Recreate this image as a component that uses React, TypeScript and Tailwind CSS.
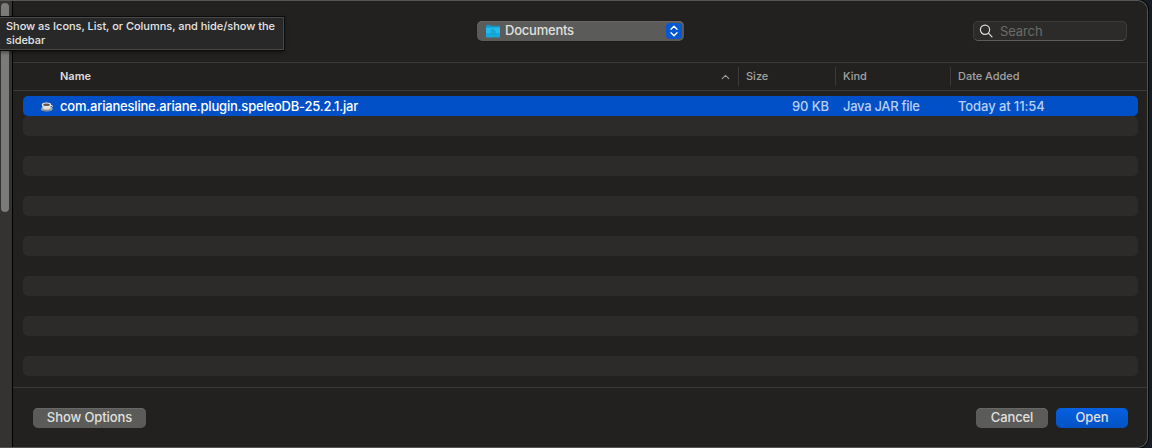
import React from "react";

const emptyRows = Array.from({ length: 13 }, (_, i) => i);

function FolderIcon() {
  return (
    <svg width="16" height="14" viewBox="0 0 16 14" className="shrink-0">
      <path d="M1 2Q1 .8 2.2.8H5.3L6.6 1.7H13.8Q15 1.7 15 2.9V5H1Z" fill="#1793c4" />
      <path d="M1 3.5H15V12.2Q15 13.2 14 13.2H2Q1 13.2 1 12.2Z" fill="#22bcec" />
      <path d="M1 9H15V12.2Q15 13.2 14 13.2H2Q1 13.2 1 12.2Z" fill="#16a9e0" />
      <path d="M6.2 5.7H8.8L10.2 7.1V11H6.2Z" fill="#1da5d3" stroke="#189ac9" strokeWidth=".6" />
    </svg>
  );
}

function JarIcon() {
  return (
    <svg width="14" height="12" viewBox="0 0 14 12" className="shrink-0">
      <ellipse cx="6.8" cy="8" rx="5.9" ry="2.4" fill="#a3a3a1" />
      <path d="M10.6 4.4Q12.9 4 12.4 5.8Q11.8 7.2 9.8 7" fill="none" stroke="#d5d5d2" strokeWidth="1" />
      <path d="M2 3.8H11Q11 7.2 8.8 8.6H4.4Q2 7.2 2 3.8Z" fill="#dededb" />
      <ellipse cx="6.5" cy="3.6" rx="4.6" ry="2.2" fill="#eeeeeb" />
      <ellipse cx="6.5" cy="3.7" rx="3.4" ry="1.3" fill="#62574f" />
      <path d="M3.5 9.2Q6.7 10.4 10 9.2" fill="none" stroke="#706f70" strokeWidth=".6" />
    </svg>
  );
}

export default function App() {
  return (
    <div className="relative h-[448px] w-[1152px] overflow-hidden bg-[#171d22] font-['Inter','Liberation_Sans',sans-serif] text-[13px] text-[#e0e0df]">
      <div className="flex h-full w-[1148px] overflow-hidden rounded-r-[10px] border-y border-r border-[#555553] bg-[#22211f] shadow-[0_0_0_1px_#050607]">
        <aside className="w-[13px] shrink-0 border-r border-black bg-[#343331] pt-[2px] pl-px">
          <div className="h-[209px] w-2 rounded-full bg-[#7b7b79]" />
        </aside>

        <main className="flex min-w-0 flex-1 flex-col">
          <header className="flex h-[62px] shrink-0 items-start border-b border-[#3b3a38] pt-5">
            <button className="ml-[464px] flex h-5 w-[207px] items-center rounded-[5px] bg-[#5b5b59] pr-[2px] pl-2 shadow-[inset_0_1px_0_#686866,0_0_1px_#111]">
              <FolderIcon />
              <span className="ml-1 whitespace-nowrap font-medium tracking-[-0.22px]">Documents</span>
              <span className="ml-auto flex h-4 w-4 items-center justify-center rounded-[4px] bg-[#0557d2]">
                <svg width="10" height="14" viewBox="0 0 10 14" fill="none" stroke="white" strokeWidth="1.4" strokeLinecap="round" strokeLinejoin="round">
                  <path d="M2 5.2 5 2.2 8 5.2M2 8.8 5 11.8 8 8.8" />
                </svg>
              </span>
            </button>
            <label className="ml-[289px] flex h-5 w-[154px] items-center rounded-[5px] border border-[#3d3c3a] border-b-[#5c5c5a] bg-[#2c2b29] pl-[5px]">
              <svg className="-mt-px" width="14" height="14" viewBox="0 0 14 14" fill="none" stroke="#dededc" strokeWidth="1.2" strokeLinecap="round">
                <circle cx="6" cy="5.7" r="4.6" />
                <path d="m9.4 9.1 3.6 3.7" />
              </svg>
              <span className="ml-[7px] pt-px tracking-[-0.1px] text-[#6b6b69]">Search</span>
            </label>
          </header>

          <div className="flex h-7 shrink-0 items-center border-b border-[#3b3a38] text-[11px] font-medium text-[#a3a3a1]">
            <div className="flex h-full w-[725px] items-center pr-2 pl-[47px]">
              <span className="font-semibold text-[#dededc]">Name</span>
              <svg className="ml-auto" width="9" height="6" viewBox="0 0 9 6" fill="none" stroke="#a0a09e" strokeWidth="1.1" strokeLinecap="round">
                <path d="m1.2 4.6 3.3-3.2 3.3 3.2" />
              </svg>
            </div>
            <div className="flex h-[19px] w-[97px] items-center border-l border-[#3b3a38] pl-[7px]">Size</div>
            <div className="flex h-[19px] w-[115px] items-center border-l border-[#3b3a38] pl-[7px]">Kind</div>
            <div className="flex h-[19px] flex-1 items-center border-l border-[#3b3a38] pl-[7px] tracking-[-0.03px]">Date Added</div>
          </div>

          <section className="h-[296px] shrink-0 px-[10px] pt-[5px]">
            <div className="flex h-5 w-[1115px] items-center whitespace-nowrap rounded-[5px] bg-[#0250c8] pt-px font-medium leading-[19px] text-[#b8cff2]">
              <div className="flex w-[715px] items-center pl-[17px]">
                <JarIcon />
                <span className="ml-[6px] tracking-[-0.2px] text-white">com.arianesline.ariane.plugin.speleoDB-25.2.1.jar</span>
              </div>
              <div className="w-[91px] text-right tracking-[-0.1px]">90 KB</div>
              <div className="ml-[14px] w-[115px] tracking-[-0.3px]">Java JAR file</div>
              <div className="tracking-[-0.1px]">Today at 11:54</div>
            </div>
            {emptyRows.map((i) => (
              <div key={i} className={i % 2 === 0 ? "h-5 w-[1115px] rounded-[5px] bg-[#2c2b2a]" : "h-5"} />
            ))}
          </section>

          <footer className="flex flex-1 items-start border-t border-[#3b3a38] pt-5 pr-[19px] pl-5 font-medium">
            <button className="h-5 w-[113px] rounded-[5px] bg-[#5b5b59] pb-px leading-[19px] tracking-[-0.1px] shadow-[inset_0_1px_0_#686866]">Show Options</button>
            <button className="ml-auto h-5 w-[72px] rounded-[5px] bg-[#5b5b59] pb-px leading-[19px] tracking-[-0.1px] shadow-[inset_0_1px_0_#686866]">Cancel</button>
            <button className="ml-2 h-5 w-[72px] rounded-[5px] bg-gradient-to-b from-[#0660df] to-[#0552c4] pb-px leading-[19px] tracking-[-0.1px]">Open</button>
          </footer>
        </main>
      </div>

      <div className="absolute top-[17px] -left-px h-[33px] w-[285px] border border-[#484847] bg-[#282828] pt-px pl-[6px] text-[11px] leading-[14px] font-medium tracking-[-0.03px] text-[#e5e5e4] shadow-[0_0_0_1px_#0c0c0c,0_2px_4px_#0008]">
        Show as Icons, List, or Columns, and hide/show the<br />sidebar
      </div>
    </div>
  );
}
